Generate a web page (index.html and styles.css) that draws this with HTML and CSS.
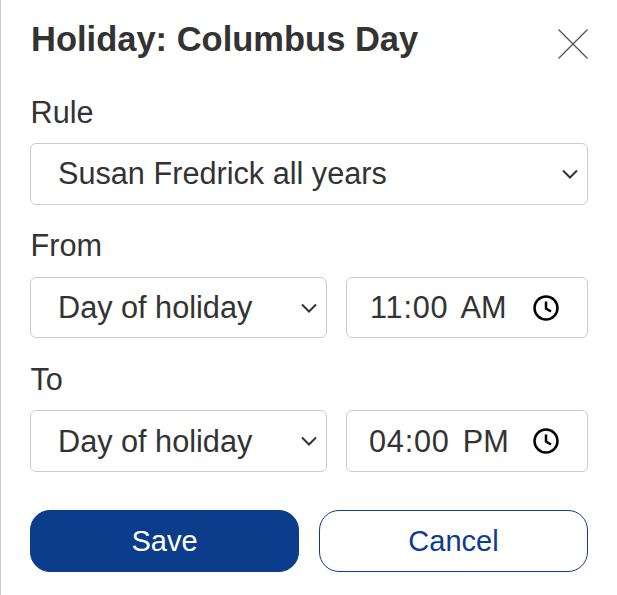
FILE: index.html
```html
<!DOCTYPE html>
<html lang="en">
<head>
<meta charset="utf-8">
<title>Holiday: Columbus Day</title>
<link rel="stylesheet" href="styles.css">
</head>
<body>
<main class="panel">
  <header class="head">
    <h1 class="title">Holiday: Columbus Day</h1>
    <button class="close" aria-label="Close">
      <svg width="30" height="30" viewBox="0 0 30 30"><path d="M0.500 0.500 29.500 29.500M29.500 0.500 0.500 29.500" class="close-x"/></svg>
    </button>
  </header>

  <div class="label label-rule">Rule</div>
  <div class="control control-full">
    <span>Susan Fredrick all years</span>
    <svg class="chev" width="16" height="10" viewBox="0 0 16 10"><path d="M1 1.500 8 8.500 15 1.500"/></svg>
  </div>

  <div class="label label-from">From</div>
  <div class="row">
    <div class="control control-day">
      <span>Day of holiday</span>
      <svg class="chev" width="16" height="10" viewBox="0 0 16 10"><path d="M1 1.500 8 8.500 15 1.500"/></svg>
    </div>
    <div class="control control-time control-am">
      <span class="time"><span class="hm">11:00</span><span>AM</span></span>
      <svg class="clock" width="26" height="26" viewBox="0 0 26 26"><circle cx="13" cy="13" r="11.500"/><path d="M13 6.500V13.500L18 16.500"/></svg>
    </div>
  </div>

  <div class="label label-to">To</div>
  <div class="row row-to">
    <div class="control control-day">
      <span>Day of holiday</span>
      <svg class="chev" width="16" height="10" viewBox="0 0 16 10"><path d="M1 1.500 8 8.500 15 1.500"/></svg>
    </div>
    <div class="control control-time">
      <span class="time"><span class="hm">04:00</span><span>PM</span></span>
      <svg class="clock" width="26" height="26" viewBox="0 0 26 26"><circle cx="13" cy="13" r="11.500"/><path d="M13 6.500V13.500L18 16.500"/></svg>
    </div>
  </div>

  <div class="actions">
    <button class="btn btn-save">Save</button>
    <button class="btn btn-cancel">Cancel</button>
  </div>
</main>
</body>
</html>
```
FILE: styles.css
```css
* { box-sizing: border-box; }
html, body { margin: 0; height: 100%; background: #fff; }
body { font-family: "Liberation Sans", Arial, sans-serif; color: #333; overflow: hidden; }
.panel { width: 617px; height: 595px; border-left: 1px solid #ccc; padding: 0 29px 0 29px; }
.head { display: flex; justify-content: space-between; align-items: flex-start; height: 95px; padding-left: 1px; }
.title { margin: 20px 0 0; font-size: 34.500px; line-height: 38px; font-weight: 700; color: #333; }
.close { margin-top: 29px; padding: 0; border: 0; background: none; width: 30px; height: 30px; }
.close svg { display: block; }
.close-x { stroke: #555; stroke-width: 1.300; fill: none; }
.label { font-size: 30.670px; line-height: 34px; padding-left: 0.500px; }
.label-rule { height: 48px; }
.label-from { height: 49px; margin-top: 23px; }
.label-to { height: 48px; margin-top: 24px; }
.control { display: flex; align-items: center; justify-content: space-between; height: 62px; border: 1px solid #ccc; border-radius: 6px; font-size: 30.670px; background: #fff; }
.control-full { padding: 0 9px 1px 27px; }
.row { display: flex; gap: 19px; height: 61px; }
.row-to { height: 62px; }
.row .control { height: 100%; }
.control-day { width: 297px; padding: 0 9px 0 27px; }
.control-time { width: 242px; padding: 0 28px 0 22px; }
.control-am { padding-left: 23px; }
.chev path { fill: none; stroke: #333; stroke-width: 2; }
.time { display: flex; gap: 13px; }
.control-am .time { gap: 12px; }
.hm { letter-spacing: 0.800px; }
.clock circle, .clock path { fill: none; stroke: #000; stroke-width: 2.500; }
.actions { display: flex; gap: 20px; margin-top: 38px; }
.btn { width: 269px; height: 62px; border-radius: 20px; font: 29px "Liberation Sans", Arial, sans-serif; padding: 0; }
.btn-save { background: #0c3c8c; border: 1px solid #0c3c8c; color: #fff; }
.btn-cancel { background: #fff; border: 1px solid #0c3c8c; color: #0c3c8c; }
```
